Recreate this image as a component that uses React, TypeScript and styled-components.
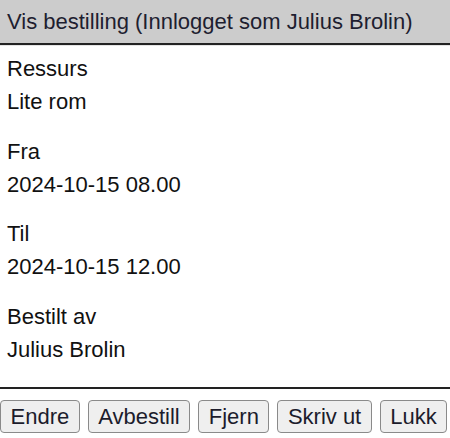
import React from 'react'
import styled, { createGlobalStyle } from 'styled-components'

const GlobalStyle = createGlobalStyle`
  html, body {
    margin: 0;
    padding: 0;
    background: #fff;
  }
  body {
    font-family: 'Liberation Sans', Arial, Helvetica, sans-serif;
    font-size: 22px;
    color: #111;
  }
`

const fields = [
  { label: 'Ressurs', value: 'Lite rom' },
  { label: 'Fra', value: '2024-10-15 08.00' },
  { label: 'Til', value: '2024-10-15 12.00' },
  { label: 'Bestilt av', value: 'Julius Brolin' },
]

const actions = ['Endre', 'Avbestill', 'Fjern', 'Skriv ut', 'Lukk']

const App = () => {
  return (
    <>
      <GlobalStyle />
      <Dialog>
        <Header>Vis bestilling (Innlogget som Julius Brolin)</Header>

        <Content>
          {fields.map((field) => (
            <Field key={field.label}>
              <Line>{field.label}</Line>
              <Line>{field.value}</Line>
            </Field>
          ))}
        </Content>

        <Footer>
          {actions.map((action) => (
            <Button key={action} type="button">
              {action}
            </Button>
          ))}
        </Footer>
      </Dialog>
    </>
  )
}

const Dialog = styled.div`
  display: flex;
  flex-direction: column;
  height: 100vh;
  box-sizing: border-box;
`

const Header = styled.div`
  background: #cccccc;
  color: #1e1e30;
  line-height: 25px;
  padding: 9px 7px;
  border-bottom: 2px solid #222;
  box-shadow: 0 1px 0 #e4e4e4;
  white-space: nowrap;
`

const Content = styled.div`
  flex: 1;
  display: flex;
  flex-direction: column;
  gap: 16.5px;
  padding: 7px 7px 0;
`

const Field = styled.div`
  display: flex;
  flex-direction: column;
`

const Line = styled.div`
  line-height: 33px;
`

const Footer = styled.div`
  display: flex;
  gap: 8px;
  border-top: 2px solid #222;
  padding: 11px 0 5px;
`

const Button = styled.button`
  height: 33px;
  padding: 0 9.5px;
  margin: 0;
  font: inherit;
  font-size: 22px;
  color: #1c1c2c;
  background: #efefef;
  border: 1.5px solid #8a8a8a;
  border-radius: 4px;
  cursor: pointer;
`

export default App
